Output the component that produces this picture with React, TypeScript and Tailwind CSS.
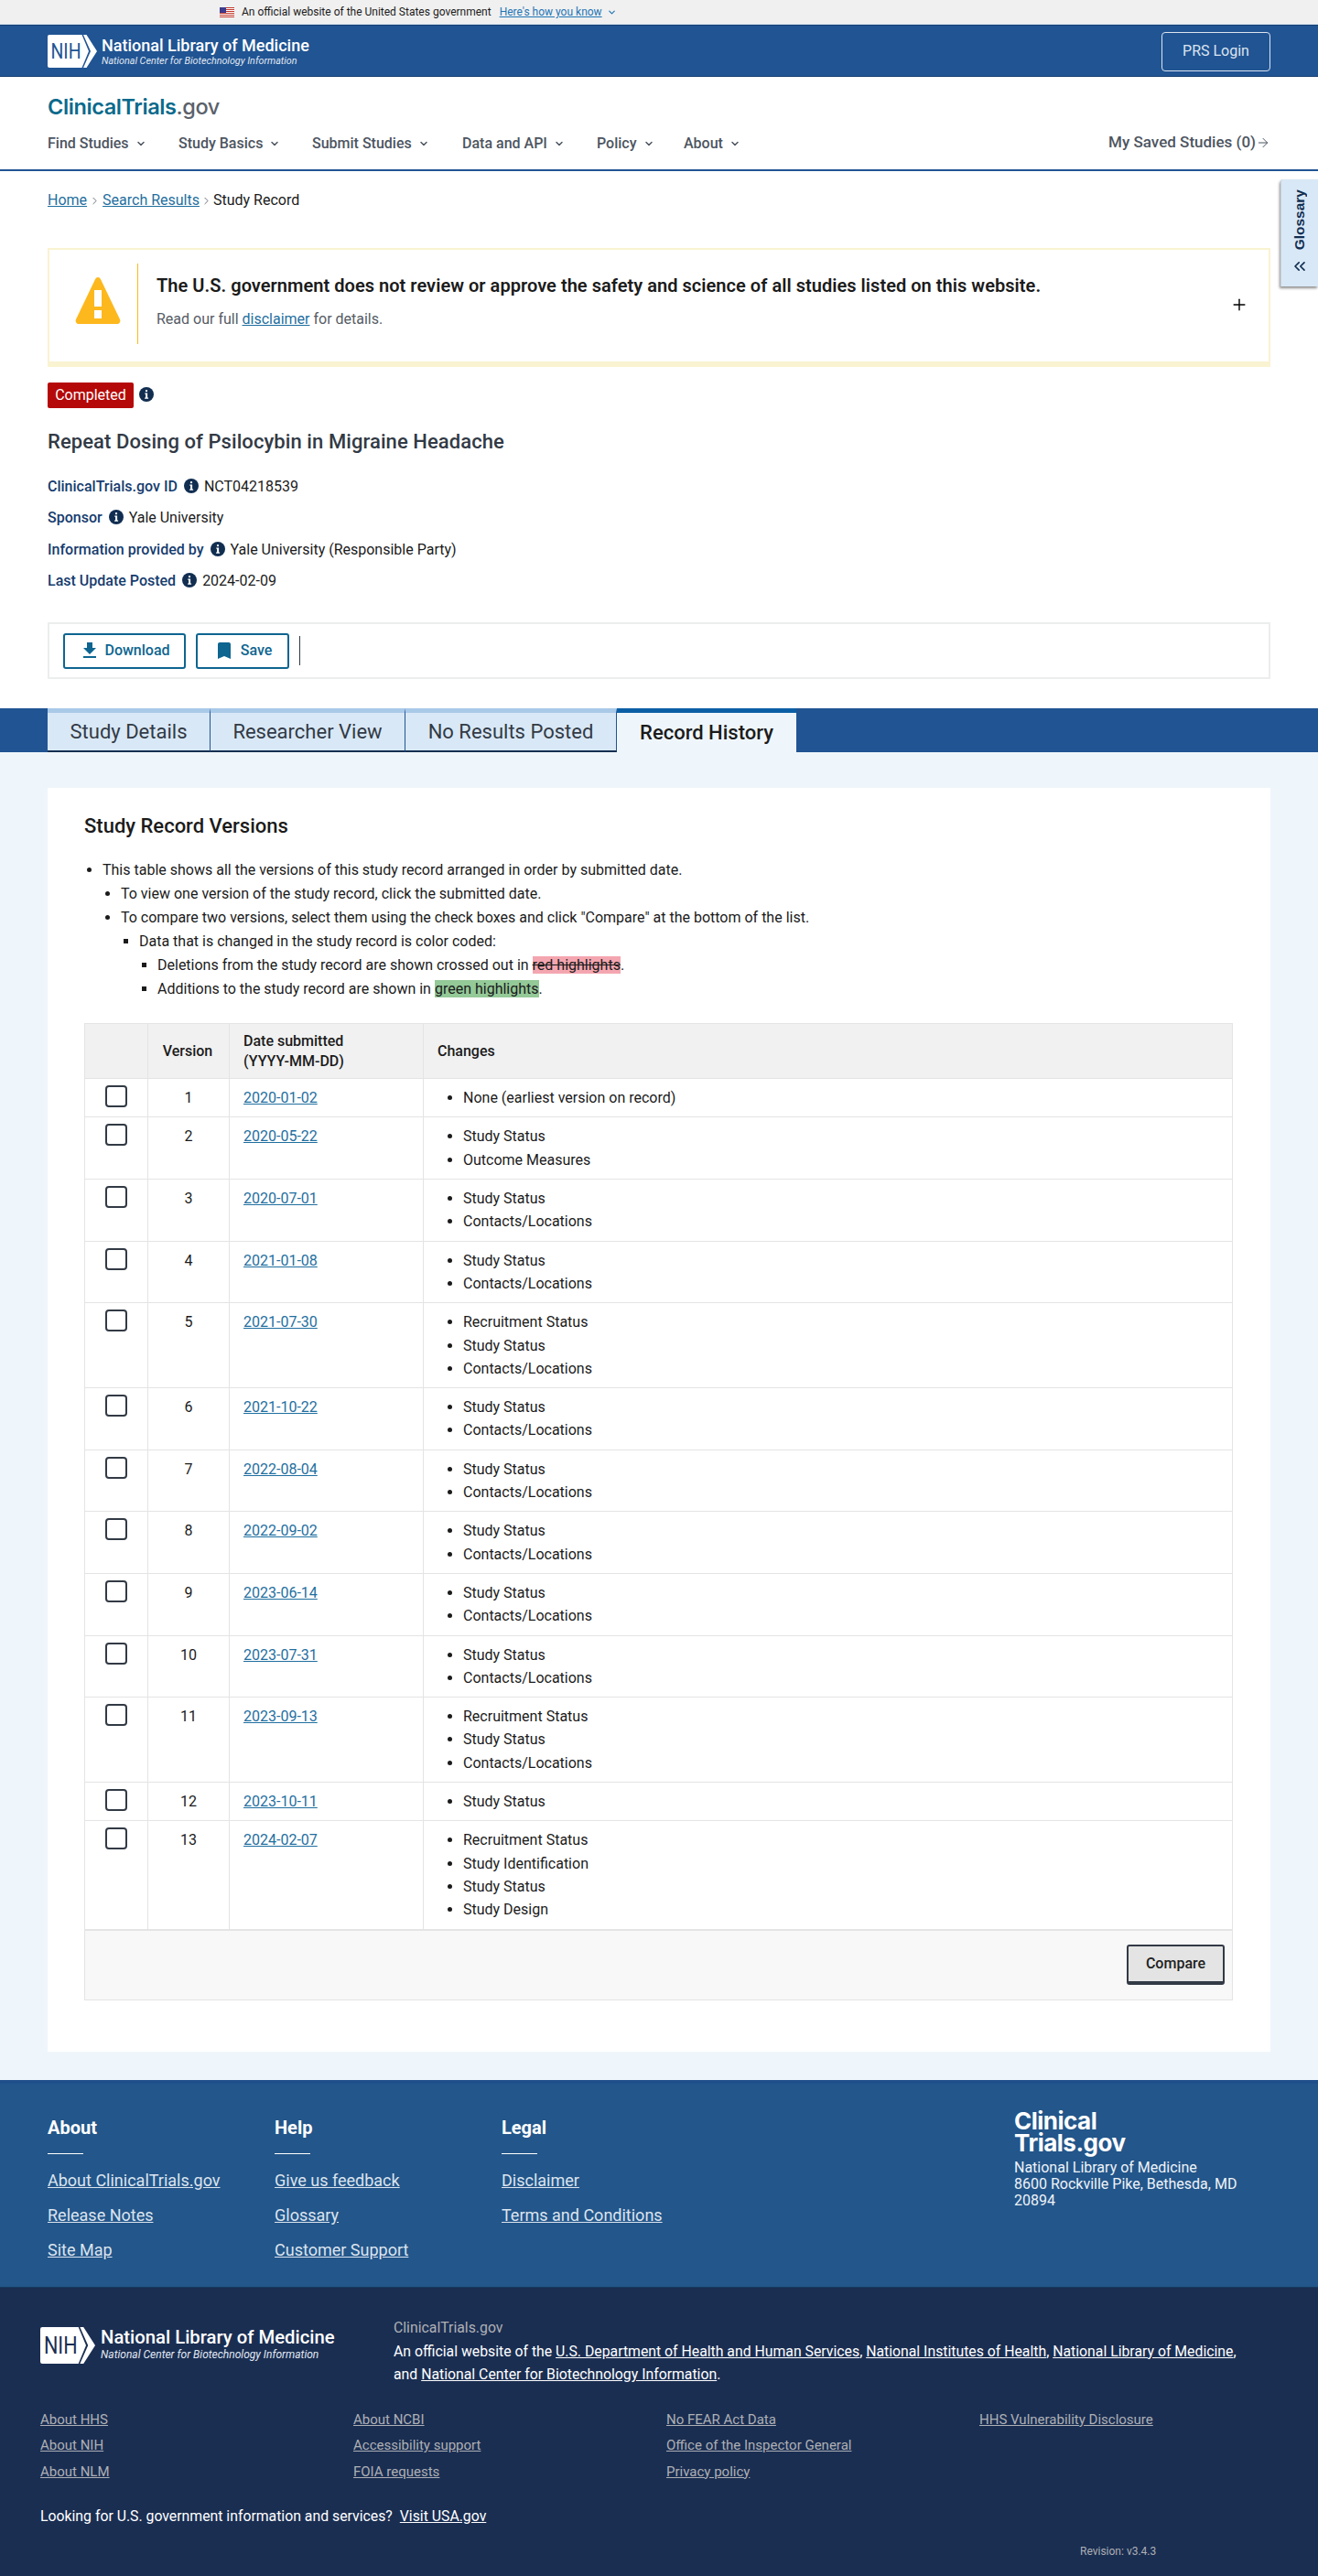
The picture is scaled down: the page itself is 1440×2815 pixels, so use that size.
import React from "react";
import { ChevronDown, ChevronRight, Plus, ChevronsLeft, ArrowRight } from "lucide-react";

const Info = ({ className = "" }: { className?: string }) => (
  <svg viewBox="0 0 16 16" className={"inline-block shrink-0 w-[16px] h-[16px] " + className}>
    <circle cx="8" cy="8" r="8" fill="#112e51" />
    <rect x="6.9" y="3" width="2.2" height="2.2" rx="1" fill="#fff" />
    <path d="M6.3 6.6h2.8v5h1v1.2H6.1v-1.2h1v-3.8h-.8z" fill="#fff" />
  </svg>
);

const NihLogo = ({ color }: { color: string }) => (
  <svg viewBox="0 0 54 36" className="w-full h-full block">
    <path d="M2 0h35.500l7.500 18-7.500 18H2a2 2 0 0 1-2-2V2a2 2 0 0 1 2-2z" fill="#fff" />
    <path d="M39 0h3.500l11.500 18-11.500 18H39l8-18z" fill="#fff" />
    <text x="20" y="26" textAnchor="middle" fontFamily="Roboto, sans-serif" fontSize="23" fill={color} textLength="33" lengthAdjust="spacingAndGlyphs">NIH</text>
  </svg>
);

const Flag = () => (
  <svg viewBox="0 0 16 11" className="w-[16px] h-[11px] block">
    <rect width="16" height="11" fill="#fff" />
    {[0, 2, 4, 6, 8, 10].map((y) => (
      <rect key={y} y={y} width="16" height="1" fill="#c0392b" />
    ))}
    <rect width="7" height="6" fill="#3c3b8e" />
  </svg>
);

const NavItem = ({ label, w }: { label: string; w: string }) => (
  <span className={"flex items-center text-[16px] font-medium text-[#4d5561] " + w}>
    {label}
    <ChevronDown size={12} strokeWidth={3} className="ml-[7px]" />
  </span>
);

const rows: [number, string, string[]][] = [
  [1, "2020-01-02", ["None (earliest version on record)"]],
  [2, "2020-05-22", ["Study Status", "Outcome Measures"]],
  [3, "2020-07-01", ["Study Status", "Contacts/Locations"]],
  [4, "2021-01-08", ["Study Status", "Contacts/Locations"]],
  [5, "2021-07-30", ["Recruitment Status", "Study Status", "Contacts/Locations"]],
  [6, "2021-10-22", ["Study Status", "Contacts/Locations"]],
  [7, "2022-08-04", ["Study Status", "Contacts/Locations"]],
  [8, "2022-09-02", ["Study Status", "Contacts/Locations"]],
  [9, "2023-06-14", ["Study Status", "Contacts/Locations"]],
  [10, "2023-07-31", ["Study Status", "Contacts/Locations"]],
  [11, "2023-09-13", ["Recruitment Status", "Study Status", "Contacts/Locations"]],
  [12, "2023-10-11", ["Study Status"]],
  [13, "2024-02-07", ["Recruitment Status", "Study Identification", "Study Status", "Study Design"]],
];

const meta: [string, string][] = [
  ["ClinicalTrials.gov ID", "NCT04218539"],
  ["Sponsor", "Yale University"],
  ["Information provided by", "Yale University (Responsible Party)"],
  ["Last Update Posted", "2024-02-09"],
];

const FootCol = ({ title, links, w }: { title: string; links: string[]; w: string }) => (
  <div className={w}>
    <div className="text-[20px] font-bold text-white leading-[24px]">{title}</div>
    <div className="w-[39px] h-px bg-white mt-[16px] mb-[15px]" />
    <div className="flex flex-col gap-[11px]">
      {links.map((l) => (
        <a key={l} className="text-[18px] leading-[27px] text-[#dce4ef] underline">{l}</a>
      ))}
    </div>
  </div>
);

const LegalCol = ({ links, w }: { links: string[]; w: string }) => (
  <div className={"flex flex-col " + w}>
    {links.map((l) => (
      <div key={l} className="h-[28.500px] flex items-center">
        <a className="text-[15px] text-[#aeb0b5] underline">{l}</a>
      </div>
    ))}
  </div>
);

export default function App() {
  return (
    <div className="relative w-[1440px] h-[2815px] overflow-hidden bg-white font-[Roboto,sans-serif] text-[#1b1b1b]">
      {/* gov banner */}
      <div className="h-[27px] bg-[#f0f0f0] border-b border-[#cfe0ee] flex items-center pl-[240px] text-[12px] text-[#1b1b1b]">
        <Flag />
        <span className="ml-[8px]">An official website of the United States government</span>
        <a className="ml-[9px] text-[#1f75b5] underline">Here's how you know</a>
        <ChevronDown size={11} strokeWidth={2.5} className="ml-[5px] text-[#1f75b5]" />
      </div>

      {/* NLM header */}
      <div className="h-[57px] bg-[#205493] border-y border-[#163f70] flex items-center justify-between px-[52px]">
        <div className="flex items-center">
          <div className="w-[54px] h-[36px]"><NihLogo color="#205493" /></div>
          <div className="ml-[5px] text-white">
            <div className="text-[18px] font-medium leading-[21px]">National Library of Medicine</div>
            <div className="text-[10.750px] italic leading-[13px] text-[#e1e8f2]">National Center for Biotechnology Information</div>
          </div>
        </div>
        <div className="w-[119px] h-[43px] mt-[1px] border border-[#dce4ef] rounded-[4px] flex items-center justify-center text-[16px] text-[#dce4ef]">PRS Login</div>
      </div>

      {/* nav */}
      <div className="h-[103px] border-b-2 border-[#205493] px-[52px]">
        <div className="pt-[18px] h-[54px] text-[23.500px] leading-[30px] font-['Inter',sans-serif] font-semibold tracking-[-0.4px]">
          <span className="text-[#0a6a8c]">ClinicalTrials</span>
          <span className="text-[#5b616b] font-medium">.gov</span>
        </div>
        <div className="flex items-center justify-between h-[38px]">
          <div className="flex">
            <NavItem label="Find Studies" w="w-[143px]" />
            <NavItem label="Study Basics" w="w-[146px]" />
            <NavItem label="Submit Studies" w="w-[164px]" />
            <NavItem label="Data and API" w="w-[147px]" />
            <NavItem label="Policy" w="w-[95px]" />
            <NavItem label="About" w="w-[80px]" />
          </div>
          <span className="flex items-center text-[17px] font-medium text-[#4d5561] -mt-[2px]">
            My Saved Studies (0)
            <ArrowRight size={16} strokeWidth={1.5} />
          </span>
        </div>
      </div>

      {/* Glossary tab */}
      <div className="absolute left-[1399px] top-[196px] w-[41px] h-[117px] bg-[#d9e8f6] rounded-tl-[3px] border-l border-[#c5cfda] shadow-[-1px_2px_3px_rgba(0,0,0,0.45)] flex flex-col items-center pt-[11px]">
        <span className="font-['Liberation_Sans',sans-serif] font-bold text-[15.500px] text-[#112e51] [writing-mode:vertical-rl] rotate-180 leading-[18px]">Glossary</span>
        <ChevronsLeft size={20} strokeWidth={2} className="text-[#112e51] mt-[8px]" />
      </div>

      <div className="px-[52px]">
        {/* breadcrumb */}
        <div className="h-[24px] mt-[20px] flex items-center text-[16px]">
          <a className="text-[#1f6f9f] underline">Home</a>
          <ChevronRight size={13} strokeWidth={1.5} className="mx-[2px] text-[#4d5561]" />
          <a className="text-[#1f6f9f] underline">Search Results</a>
          <ChevronRight size={13} strokeWidth={1.5} className="mx-[1px] text-[#4d5561]" />
          <span className="text-[#1b1b1b]">Study Record</span>
        </div>

        {/* alert */}
        <div className="mt-[40px] h-[130px] border-x-2 border-t-2 border-b-[6px] border-[#faf3d1] flex">
          <div className="w-[97px] h-[88px] mt-[15px] border-r border-[#fdb81e] flex items-center justify-center shrink-0">
            <svg viewBox="0 0 50 52" className="w-[50px] h-[52px] ml-[9px] -mt-[8px]">
              <path d="M25 1c1.300 0 2.200.7 2.900 2L49 47c1 2.200-.2 5-3 5H4c-2.800 0-4-2.800-3-5L22.100 3c.7-1.300 1.600-2 2.900-2z" fill="#fdb81e" />
              <rect x="21" y="15" width="8" height="18" fill="#fff" />
              <rect x="21" y="37" width="8" height="9" fill="#fff" />
            </svg>
          </div>
          <div className="pl-[20px] flex-1 pt-[25px]">
            <div className="text-[20px] font-semibold tracking-[0.04px] leading-[28px] text-[#1b1b1b]">The U.S. government does not review or approve the safety and science of all studies listed on this website.</div>
            <div className="mt-[11px] text-[16px] leading-[24px] text-[#565c65]">
              Read our full <a className="text-[#1f6f9f] underline">disclaimer</a> for details.
            </div>
          </div>
          <Plus size={20} strokeWidth={1.7} className="mt-[50px] mr-[22px] text-black" />
        </div>

        {/* status */}
        <div className="mt-[17px] flex items-center h-[28px]">
          <span className="w-[94px] h-[28px] bg-[#b50909] rounded-[2px] flex items-center justify-center text-white text-[16px]">Completed</span>
          <Info className="ml-[6px] -mt-[3px]" />
        </div>
        <div className="mt-[21px] h-[30px] flex items-center text-[22px] font-medium tracking-[0.08px] text-[#323a45]">Repeat Dosing of Psilocybin in Migraine Headache</div>

        <div className="mt-[18px] flex flex-col">
          {meta.map(([k, v]) => (
            <div key={k} className="h-[34.300px] flex items-center text-[16px]">
              <span className="font-medium text-[#163c6e]">{k}</span>
              <Info className="ml-[7px] -mt-[2px]" />
              <span className="ml-[6px]">{v}</span>
            </div>
          ))}
        </div>

        {/* actions */}
        <div className="mt-[28px] h-[62px] border-2 border-[#eceded] flex items-center pl-[15px]">
          <button className="w-[134px] h-[39px] border-2 border-[#0e6590] rounded-[3px] flex items-center justify-center text-[16px] font-medium text-[#0e6590]">
            <svg viewBox="0 0 24 24" className="w-[24px] h-[24px] mr-[4px]" fill="#0e6590"><path d="M19 9h-4V3H9v6H5l7 7 7-7zM5 18v2h14v-2H5z" /></svg>
            Download
          </button>
          <button className="ml-[11px] w-[102px] h-[39px] border-2 border-[#0e6590] rounded-[3px] flex items-center justify-center text-[16px] font-medium text-[#0e6590]">
            <svg viewBox="0 0 24 24" className="w-[24px] h-[24px] mr-[6px]" fill="#0e6590"><path d="M17 3H7c-1.100 0-2 .9-2 2v16l7-3 7 3V5c0-1.100-.9-2-2-2z" /></svg>
            Save
          </button>
          <div className="ml-[11px] w-px h-[32px] bg-[#323a45]" />
        </div>
      </div>

      {/* tabs */}
      <div className="mt-[32px] h-[48px] bg-[#205493] pl-[52px] flex">
        {[
          ["Study Details", "w-[178px]"],
          ["Researcher View", "w-[213px]"],
          ["No Results Posted", "w-[231px]"],
        ].map(([t, w]) => (
          <div key={t} className={"h-[48px] bg-[#d9e8f6] border-t-[5px] border-t-[#a9c9e8] border-b-[2px] border-b-[#112e51] border-r border-r-[#205493] flex items-center justify-center text-[22px] text-[#323a45] " + w}>{t}</div>
        ))}
        <div className="w-[196px] h-[48px] bg-[#eff6fb] border-t-[5px] border-t-[#0b5fa5] flex items-center justify-center text-[22px] font-medium text-[#1b1b1b]">Record History</div>
      </div>

      {/* main */}
      <div className="h-[1451px] bg-[#eff6fb] px-[52px] pt-[39px]">
        <div className="h-[1381px] bg-white px-[40px]">
          <h2 className="pt-[27px] text-[22px] leading-[30px] font-medium text-[#1b1b1b]">Study Record Versions</h2>
          <ul className="mt-[20px] text-[16px] leading-[26px] text-[#1b1b1b] list-disc pl-[20px]">
            <li>This table shows all the versions of this study record arranged in order by submitted date.
              <ul className="list-disc pl-[20px]">
                <li>To view one version of the study record, click the submitted date.</li>
                <li>To compare two versions, select them using the check boxes and click "Compare" at the bottom of the list.
                  <ul className="list-[square] pl-[20px]">
                    <li>Data that is changed in the study record is color coded:
                      <ul className="list-[square] pl-[20px]">
                        <li>Deletions from the study record are shown crossed out in <span className="bg-[#f4a6b0] line-through">red highlights</span>.</li>
                        <li>Additions to the study record are shown in <span className="bg-[#94c998]">green highlights</span>.</li>
                      </ul>
                    </li>
                  </ul>
                </li>
              </ul>
            </li>
          </ul>

          <table className="mt-[24px] w-[1255px] table-fixed border-collapse text-[16px]">
            <colgroup>
              <col className="w-[69px]" />
              <col className="w-[89px]" />
              <col className="w-[212px]" />
              <col />
            </colgroup>
            <thead>
              <tr className="h-[60px] bg-[#f1f1f1] font-medium">
                <th className="border border-[#e4e4e4]" />
                <th className="border border-[#e4e4e4] font-medium text-center pr-[2px]">Version</th>
                <th className="border border-[#e4e4e4] font-medium text-left pl-[15px] leading-[22px]">Date submitted<br />(YYYY-MM-DD)</th>
                <th className="border border-[#e4e4e4] font-medium text-left pl-[15px]">Changes</th>
              </tr>
            </thead>
            <tbody>
              {rows.map(([n, d, c]) => (
                <tr key={n}>
                  <td className="border border-[#e4e4e4] align-top pt-[7px] pb-0">
                    <div className="w-[24px] h-[24px] ml-[22px] border-2 border-[#323a45] rounded-[4px] bg-white" />
                  </td>
                  <td className="border border-[#e4e4e4] align-top text-center pt-[8px] leading-[25px]">{n}</td>
                  <td className="border border-[#e4e4e4] align-top pl-[15px] pt-[8px] leading-[25px]"><a className="text-[#1f6f9f] underline">{d}</a></td>
                  <td className="border border-[#e4e4e4] align-top pl-[43px] pt-[8px] pb-[8px] leading-[25.300px]">
                    <ul className="list-disc">
                      {c.map((x) => <li key={x}>{x}</li>)}
                    </ul>
                  </td>
                </tr>
              ))}
              <tr className="h-[77px] bg-[#f8f8f8]">
                <td colSpan={4} className="border border-[#e4e4e4] border-t-2 pr-[8px] text-right align-top pt-[15px]">
                  <button className="inline-flex items-center justify-center w-[107px] h-[44px] bg-[#e4e4e4] border-2 border-b-[4px] border-[#323a45] rounded-[3px] font-medium text-[16px] text-[#212121]">Compare</button>
                </td>
              </tr>
            </tbody>
          </table>
        </div>
      </div>

      {/* footer */}
      <div className="h-[226px] bg-[#23568a] border-t-4 border-[#1f4f8a] flex pl-[52px] pt-[36px]">
        <FootCol title="About" links={["About ClinicalTrials.gov", "Release Notes", "Site Map"]} w="w-[248px]" />
        <FootCol title="Help" links={["Give us feedback", "Glossary", "Customer Support"]} w="w-[248px]" />
        <FootCol title="Legal" links={["Disclaimer", "Terms and Conditions"]} w="w-[560px]" />
        <div className="-mt-[7px] text-white">
          <div className="font-['Inter',sans-serif] font-bold text-[26px] leading-[24px] tracking-[-0.5px]">Clinical<br />Trials.gov</div>
          <div className="mt-[6px] text-[16px] leading-[18px] text-[#eef3f9] w-[290px]">National Library of Medicine<br />8600 Rockville Pike, Bethesda, MD 20894</div>
        </div>
      </div>

      <div className="h-[316px] bg-[#1a2e52] border-t border-[#183a5f] pl-[44px] relative">
        <div className="flex pt-[43px]">
          <div className="w-[386px] flex">
            <div className="w-[60px] h-[40px]"><NihLogo color="#1a2e52" /></div>
            <div className="ml-[6px] text-white">
              <div className="text-[20.300px] leading-[23px] font-medium">National Library of Medicine</div>
              <div className="text-[12px] italic leading-[14px] text-[#e1e8f2]">National Center for Biotechnology Information</div>
            </div>
          </div>
          <div className="-mt-[12px] text-[15.800px] leading-[25.500px] text-white">
            <div className="text-[#aeb0b5]">ClinicalTrials.gov</div>
            <div>An official website of the <a className="underline">U.S. Department of Health and Human Services</a>, <a className="underline">National Institutes of Health</a>, <a className="underline">National Library of Medicine</a>,</div>
            <div>and <a className="underline">National Center for Biotechnology Information</a>.</div>
          </div>
        </div>
        <div className="flex mt-[22px]">
          <LegalCol w="w-[342px]" links={["About HHS", "About NIH", "About NLM"]} />
          <LegalCol w="w-[342px]" links={["About NCBI", "Accessibility support", "FOIA requests"]} />
          <LegalCol w="w-[342px]" links={["No FEAR Act Data", "Office of the Inspector General", "Privacy policy"]} />
          <LegalCol w="w-[342px]" links={["HHS Vulnerability Disclosure"]} />
        </div>
        <div className="mt-[23px] text-[15.800px] text-white leading-[24px]">Looking for U.S. government information and services?<a className="ml-[8px] underline">Visit USA.gov</a></div>
        <div className="absolute left-[1180px] top-[279px] text-[12px] text-[#aeb0b5]">Revision: v3.4.3</div>
      </div>
    </div>
  );
}
